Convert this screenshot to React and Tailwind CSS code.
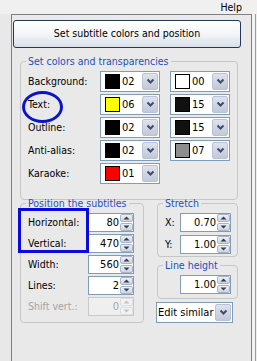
const font = { fontFamily: '"DejaVu Sans Condensed", "DejaVu Sans", sans-serif' }

function Chevron() {
  return (
    <svg width="9" height="7" viewBox="0 0 9 7">
      <path d="M1.5 1.5 L4.5 4.5 L7.5 1.5" fill="none" stroke="#3c4d6e" strokeWidth="2" />
    </svg>
  )
}

function DropButton() {
  return (
    <div className="w-[16px] my-[1px] mr-[1px] rounded-[2px] border border-[#b9c2d6] bg-gradient-to-b from-[#dfe3ee] to-[#c3c8d8] flex items-center justify-center">
      <Chevron />
    </div>
  )
}

function ColorCombo({ color, value }) {
  return (
    <div className="w-[60px] h-[21px] border border-[#7f9db9] bg-white flex">
      <div className="flex items-center flex-1">
        <div className="w-[15px] h-[15px] border border-black ml-[4px]" style={{ background: color }} />
        <span className="ml-[2px] text-[11px] text-black leading-none">{value}</span>
      </div>
      <DropButton />
    </div>
  )
}

function Arrow({ up, disabled }) {
  const c = disabled ? '#c4c4c4' : '#2f3d58'
  return (
    <svg width="7" height="4" viewBox="0 0 7 4">
      {up ? <path d="M0.5 3.5 L3.5 0.5 L6.5 3.5 Z" fill={c} /> : <path d="M0.5 0.5 L3.5 3.5 L6.5 0.5 Z" fill={c} />}
    </svg>
  )
}

function Spin({ value, width = 'w-[46px]', disabled }) {
  const btn = disabled
    ? 'border-[#dedede] bg-[#f2f2f2]'
    : 'border-[#aab4c8] bg-gradient-to-b from-[#eef0f5] to-[#cdd3df]'
  return (
    <div className={`${width} h-[19px] border flex ${disabled ? 'border-[#c9c9c9] bg-[#efefef]' : 'border-[#7f9db9] bg-white'}`}>
      <span className={`flex-1 text-right pr-[1px] text-[11px] leading-[17px] ${disabled ? 'text-[#a8a8a8]' : 'text-black'}`}>{value}</span>
      <div className="w-[13px] flex flex-col gap-[1px]">
        <div className={`flex-1 rounded-[2px] border flex items-center justify-center ${btn}`}>
          <Arrow up disabled={disabled} />
        </div>
        <div className={`flex-1 rounded-[2px] border flex items-center justify-center ${btn}`}>
          <Arrow disabled={disabled} />
        </div>
      </div>
    </div>
  )
}

function Group({ title, className, children }) {
  return (
    <fieldset className={`border border-[#c6c6c6] rounded-[4px] ${className}`}>
      <legend className="ml-[5px] px-[2px] text-[#1f4fc0] leading-[12px]">{title}</legend>
      {children}
    </fieldset>
  )
}

const colorRows = [
  { label: 'Background:', a: ['#000000', '02'], b: ['#ffffff', '00'] },
  { label: 'Text:', a: ['#ffff00', '06'], b: ['#111111', '15'] },
  { label: 'Outline:', a: ['#000000', '02'], b: ['#111111', '15'] },
  { label: 'Anti-alias:', a: ['#000000', '02'], b: ['#8e8e8e', '07'] },
  { label: 'Karaoke:', a: ['#ff0000', '01'] },
]

const posRows = [
  { label: 'Horizontal:', value: '80' },
  { label: 'Vertical:', value: '470' },
  { label: 'Width:', value: '560' },
  { label: 'Lines:', value: '2' },
  { label: 'Shift vert.:', value: '0', disabled: true },
]

export default function App() {
  return (
    <div className="relative w-[257px] h-[361px] overflow-hidden bg-[#e8e8e8] text-[10.5px] text-black" style={font}>
      <div className="h-[14px] bg-[#f0f0f0] flex items-center justify-end pr-[15px] leading-none">Help</div>

      <div className="flex">
        <div className="w-[11px]" />
        <div className="w-[241px] h-[347px] border-l border-t border-r border-[#808080] bg-[#e9e9e9]">
          <button className="mt-[5px] ml-[1px] w-[228px] h-[28px] rounded-[3px] border border-[#22385a] bg-gradient-to-b from-white via-[#f3f5f8] to-[#d9e0ea] text-black">
            Set subtitle colors and position
          </button>

          <Group title="Set colors and transparencies" className="mt-[7px] ml-[8px] w-[218px] pb-[15px]">
            <div className="pt-[4px] pl-[7px] flex flex-col gap-[2px]">
              {colorRows.map((r) => (
                <div key={r.label} className="h-[21px] flex items-center">
                  <span className="w-[72px]">{r.label}</span>
                  <ColorCombo color={r.a[0]} value={r.a[1]} />
                  {r.b && (
                    <div className="ml-[10px]">
                      <ColorCombo color={r.b[0]} value={r.b[1]} />
                    </div>
                  )}
                </div>
              ))}
            </div>
          </Group>

          <div className="-mt-[3px] ml-[8px] flex">
            <Group title="Position the subtitles" className="w-[124px] pb-[6px]">
              <div className="pt-[4px] pl-[7px] flex flex-col gap-[2px]">
                {posRows.map((r) => (
                  <div key={r.label} className="h-[19px] flex items-center">
                    <span className={`w-[60px] ${r.disabled ? 'text-[#a6a6a6]' : ''}`}>{r.label}</span>
                    <Spin value={r.value} disabled={r.disabled} />
                  </div>
                ))}
              </div>
            </Group>

            <div className="ml-[12px] w-[82px] flex flex-col">
              <Group title="Stretch" className="ml-[1px] w-[81px] pb-[2px]">
                <div className="pt-[4px] pl-[7px] flex flex-col gap-[3px]">
                  <div className="h-[19px] flex items-center">
                    <span className="w-[15px]">X:</span>
                    <Spin value="0.70" width="w-[51px]" />
                  </div>
                  <div className="h-[19px] flex items-center">
                    <span className="w-[15px]">Y:</span>
                    <Spin value="1.00" width="w-[51px]" />
                  </div>
                </div>
              </Group>

              <Group title="Line height" className="mt-[2px] ml-[1px] w-[81px] pb-[4px]">
                <div className="pt-[4px] pl-[22px]">
                  <Spin value="1.00" width="w-[51px]" />
                </div>
              </Group>

              <div className="mt-[3px] w-[77px] h-[21px] border border-[#7f9db9] bg-white flex">
                <span className="flex-1 pl-[1px] text-[11px] leading-[19px]">Edit similar</span>
                <DropButton />
              </div>
            </div>
          </div>
        </div>
        <div className="w-[5px] h-[347px] flex">
          <div className="w-[3px] bg-[#f3f3f3]" />
          <div className="w-[1px] bg-[#9a9a9a]" />
          <div className="w-[1px] bg-[#eeeeee]" />
        </div>
      </div>

      <div className="absolute left-[22px] top-[91px] w-[41px] h-[32px] rounded-[50%] border-[3px] border-[#0a14c8]" />
      <div className="absolute left-[18px] top-[208px] w-[71px] h-[45px] border-[3px] border-[#0a0ae0]" />
    </div>
  )
}
